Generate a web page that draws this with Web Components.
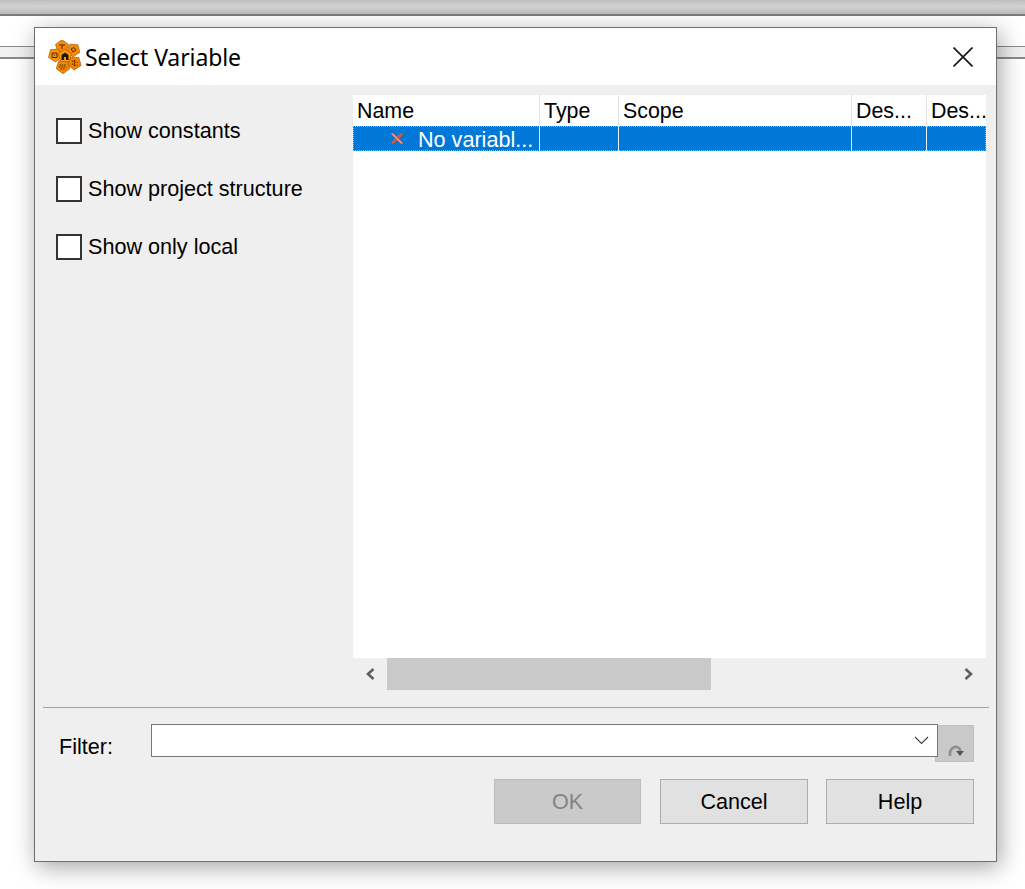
<!DOCTYPE html>
<html><head><meta charset="utf-8"><title>Select Variable</title>
<style>
html,body{margin:0;padding:0;background:#fff;}
body{width:1025px;height:889px;overflow:hidden;font-family:"Liberation Sans",Arial,sans-serif;color:#000;}
</style></head><body>
<x-desktop>
  <x-dialog heading="Select Variable">
    <x-checkbox slot="options">Show constants</x-checkbox>
    <x-checkbox slot="options">Show project structure</x-checkbox>
    <x-checkbox slot="options">Show only local</x-checkbox>
    <x-table slot="table"></x-table>
    <x-scrollbar slot="table"></x-scrollbar>
    <x-filter slot="filter"></x-filter>
    <x-button slot="buttons" disabled narrow>OK</x-button>
    <x-button slot="buttons">Cancel</x-button>
    <x-button slot="buttons">Help</x-button>
  </x-dialog>
</x-desktop>
<script>
function def(name,html,init){
  customElements.define(name,class extends HTMLElement{
    constructor(){super();this.attachShadow({mode:'open'}).innerHTML=typeof html==='function'?html(this):html;}
    connectedCallback(){if(init)init(this);}
  });
}
def('x-desktop',`<style>
:host{display:block;position:relative;width:1025px;height:889px;overflow:hidden;background:#fff}
.top{height:14px;background:linear-gradient(#bdbdbd,#d2d2d2 45%,#bcbcbc);border-bottom:2px solid #7b7b7b}
.strip{margin-top:30px;height:10px;background:#f0f0f0;border-top:1px solid #8a8a8a;border-bottom:2px solid #8a8a8a}
</style><div class="top"></div><div class="strip"></div><slot></slot>`);

function penta(cx,cy,r,rot,fill){
  let p=[];
  for(let i=0;i<5;i++){const a=(rot+i*72-90)*Math.PI/180;p.push((cx+r*Math.cos(a)).toFixed(1)+','+(cy+r*Math.sin(a)).toFixed(1));}
  return `<polygon points="${p.join(' ')}" fill="${fill}"/>`;
}
def('x-logo',`<style>:host{display:block;width:34px;height:34px;flex:none}svg{display:block}</style>
<svg width="34" height="34" viewBox="0 0 34 34">
<g stroke="#b05a00" stroke-width=".7">
${penta(14,6.500,6.800,0,'#f78a06')}
${penta(25.500,10,6.800,40,'#f78a06')}
${penta(7,15,7,-40,'#fb9408')}
${penta(26.500,23,7,110,'#f08000')}
${penta(15,26.500,7.200,180,'#f58a08')}
${penta(17,16,7,0,'#f89a10')}
</g>
<g stroke="#3a2000" stroke-width=".9" fill="none">
<path d="M11 5h6M14 5v4"/>
<path d="M23 9l3-1.500 2 2.500-3 2z"/>
<path d="M4 13h5v4.500h-5zM5.500 15h1.500"/>
<path d="M24 21l5.500 1.500M24 24l5.500 1.500M26.500 20v6" stroke-dasharray="1.500 1"/>
<path d="M11.500 25h7M11 27h7.500M12.500 29h5" stroke-dasharray="1.500 .8"/>
<path d="M13.500 20v-5l3.500-2.500 3.500 2.500v5h-2.500v-3h-2v3z" fill="#2a1600" stroke="none"/>
</g></svg>`);

def('x-dialog',el=>`<style>
:host{display:block;position:absolute;left:34px;top:27px;width:961px;height:833px;border:1px solid #6f6f6f;background:#efefef;box-shadow:3px 5px 22px rgba(0,0,0,.36);}
.title{height:57px;background:#fff;display:flex;align-items:center;box-sizing:border-box;padding-left:13px;position:relative}
.title span{font:23px/1 "Noto Sans","Open Sans",sans-serif;margin:2px 0 0 3px;color:#000;letter-spacing:-.1px}
.close{margin-left:auto;margin-right:23px;width:20px;height:20px;display:block}
.main{display:flex;padding-top:10px;height:605px;box-sizing:border-box}
.opts{width:318px;box-sizing:border-box;padding:23px 0 0 21px;display:flex;flex-direction:column;gap:32px}
.tbl{width:633px;display:flex;flex-direction:column}
.sep{height:1px;background:#a0a0a0;margin:17px 7px 0 8px}
.bottom{padding:16px 22px 0 24px;}
.btns{display:flex;justify-content:flex-end;gap:19px;margin-top:17px}
::slotted(x-button:last-child){margin-left:-1px}
</style>
<div class="title"><x-logo></x-logo><span>${el.getAttribute('heading')}</span>
<svg class="close" viewBox="0 0 20 20"><path d="M.5.5l19 19M19.500.5l-19 19" stroke="#1a1a1a" stroke-width="1.700" fill="none"/></svg></div>
<div class="main"><div class="opts"><slot name="options"></slot></div><div class="tbl"><slot name="table"></slot></div></div>
<div class="sep"></div>
<div class="bottom"><slot name="filter"></slot><div class="btns"><slot name="buttons"></slot></div></div>`);

def('x-checkbox',`<style>
:host{display:flex;align-items:center;height:26px;font:21.6px/26px "Liberation Sans",Arial,sans-serif}
i{display:block;width:22px;height:22px;border:2px solid #333;background:#fff;margin-right:6px;flex:none}
</style><i></i><span><slot></slot></span>`);

def('x-table',()=>{
 const cols=[['Name',187],['Type',79],['Scope',233],['Des...',75],['Des...',59]];
 return `<style>
:host{display:block;height:563px;background:#fff;font:21.4px "Liberation Sans",Arial,sans-serif;overflow:hidden}
.r{display:flex}
.h{height:31px}
.h div{box-sizing:border-box;border-right:1px solid #e3e3e3;padding:4px 0 0 4px;line-height:24px;white-space:nowrap;height:31px}
.h div:last-child{border-right:0}
.b{height:25px;background:#0078d7;color:#fff;box-sizing:border-box;outline:1px dotted #e8a050;outline-offset:-1px}
.b div{box-sizing:border-box;border-right:1px solid #e8f2fb;height:25px;line-height:25px;position:relative;white-space:nowrap;overflow:hidden}
.b div:last-child{border-right:0}
.b svg{position:absolute;left:38px;top:6px}
.b span{position:absolute;left:65px;top:1px;font-size:21.6px}
</style>
<div class="r h">${cols.map(c=>`<div style="width:${c[1]}px">${c[0]}</div>`).join('')}</div>
<div class="r b">${cols.map((c,i)=>`<div style="width:${c[1]}px">${i==0?`<svg width="12" height="13" viewBox="0 0 12 13"><path d="M1 1.500l10 10M11 1.500l-10 10" stroke="#cf5a44" stroke-width="2.800" fill="none"/><path d="M1 1.500l10 10" stroke="#f0dcd6" stroke-width="1" fill="none"/></svg><span>No variabl...</span>`:''}</div>`).join('')}</div>`;
});

def('x-scrollbar',`<style>
:host{display:flex;height:32px;align-items:stretch;background:#efefef}
.a{width:34px;display:flex;align-items:center;justify-content:center;position:relative}
.t{width:324px;background:#c9c9c9}
.s{flex:1}
svg{display:block}
</style>
<div class="a"><svg width="10" height="12" viewBox="0 0 10 12"><path d="M8.500 1L3 6l5.500 5" stroke="#5f5f5f" stroke-width="2.600" fill="none"/></svg></div>
<div class="t"></div><div class="s"></div>
<div class="a"><svg width="10" height="12" viewBox="0 0 10 12"><path d="M1.500 1L7 6l-5.500 5" stroke="#5f5f5f" stroke-width="2.600" fill="none"/></svg></div>`);

def('x-filter',`<style>
:host{display:flex;height:38px;align-items:flex-start;font:21.6px "Liberation Sans",Arial,sans-serif}
label{width:92px;line-height:24px;margin-top:11px}
.c{height:31px;border:1px solid #777;background:#fff;display:flex;align-items:center;justify-content:flex-end;padding-right:8px;margin-right:-3px;position:relative;z-index:1;width:777px}
.g{box-sizing:border-box;width:39px;height:37px;margin-top:1px;background:#c9c9c9;border:1px solid #c0c0c0;display:flex;align-items:flex-end;justify-content:center;padding:0 0 3px 2px}
svg{display:block}
</style><label>Filter:</label>
<div class="c"><svg width="15" height="9" viewBox="0 0 15 9"><path d="M1 1l6.500 6.500L14 1" stroke="#444" stroke-width="1.200" fill="none"/></svg></div>
<div class="g"><svg width="18" height="14" viewBox="0 0 18 14"><path d="M3 12C2 6 6 2 10 3c2 .5 3 2 3.500 4" stroke="#8f8f8f" stroke-width="2.600" fill="none"/><path d="M9 7h8l-4 5z" fill="#555"/></svg></div>`);

def('x-button',el=>`<style>
:host{display:block}
button{display:block;box-sizing:border-box;width:${el.hasAttribute('narrow')?147:148}px;height:45px;padding:0;margin:0;font:21.6px "Liberation Sans",Arial,sans-serif;border:1px solid #adadad;background:#e1e1e1;color:#000}
button[disabled]{background:#cacaca;border-color:#bdbdbd;color:#838383}
</style><button ${el.hasAttribute('disabled')?'disabled':''}><slot></slot></button>`);
</script>
</body></html>
